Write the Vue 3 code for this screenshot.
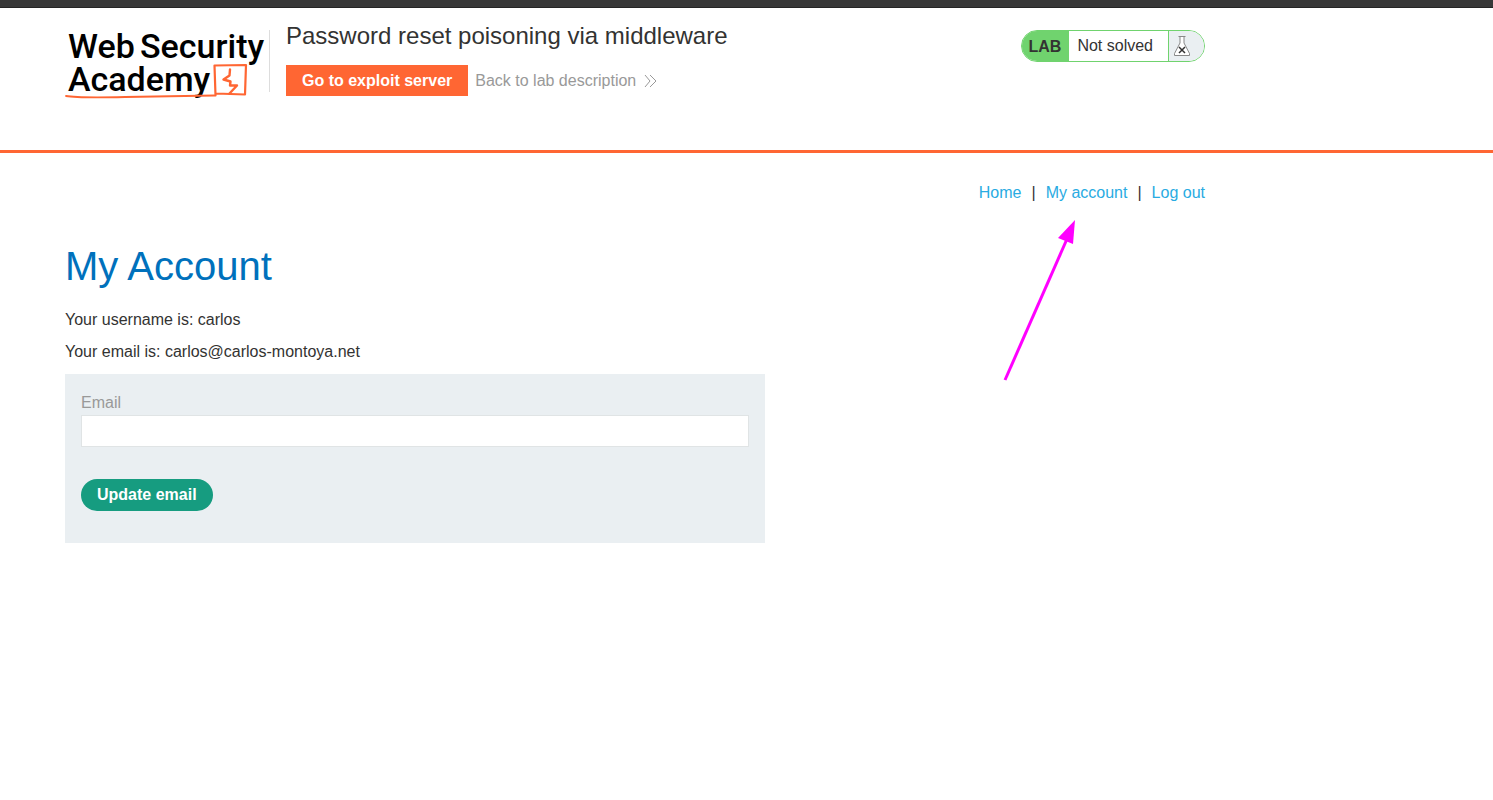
<script setup>
import { ref } from 'vue'

const email = ref('')
const links = ['Home', 'My account', 'Log out']
</script>

<template>
  <div class="page">
    <div class="topbar"></div>
    <header class="banner">
      <div class="container banner-row">
        <a class="logo" href="#" aria-label="Web Security Academy">
          <svg width="200" height="72" viewBox="0 0 200 72">
            <g class="wordmark">
              <text x="3" y="28">Web</text>
              <text x="75" y="28">Security</text>
              <text x="3" y="61">Academy</text>
            </g>
            <g fill="none" stroke="#ff6633" stroke-linejoin="round" stroke-linecap="round">
              <path d="M1 66Q12 68 60 67L149.500 65.500" stroke-width="1.800" />
              <path d="M150.500 65.500L149.500 35.500L181 35L180 64.500L151 63.500" stroke-width="2.200" />
              <path d="M165 39.500L164.500 45.500L158.500 49.500L165.500 51.500L165 55.500L172 55.500L164.500 63.500" stroke-width="2.400" />
            </g>
          </svg>
        </a>
        <div class="title">
          <h2>Password reset poisoning via middleware</h2>
          <div class="actions">
            <a class="exploit" href="#">Go to exploit server</a>
            <a class="back" href="#">
              Back to lab description
              <svg width="14" height="14" viewBox="0 0 14 14" fill="none" stroke="#999" stroke-width="1">
                <path d="M1 1L6 7L1 13M6 1L12 7L6 13" />
              </svg>
            </a>
          </div>
        </div>
        <div class="status">
          <span class="lab">LAB</span>
          <span class="state">Not solved</span>
          <span class="flask">
            <svg width="18" height="22" viewBox="0 0 18 22">
              <path d="M5.500 1.500H12.500M7 1.500V8L1.500 18.500V20.500H16.500V18.500L11 8V1.500" fill="#fff" stroke="#888" />
              <path d="M6 12L12 18M12 12L6 18" fill="none" stroke="#333" stroke-width="1.500" />
            </svg>
          </span>
        </div>
      </div>
    </header>
    <main class="container">
      <nav>
        <template v-for="(link, i) in links" :key="link">
          <span v-if="i" class="sep">|</span>
          <a href="#">{{ link }}</a>
        </template>
        <svg class="arrow" width="76" height="164" viewBox="0 0 76 164">
          <path d="M3 161L65 20" stroke="#ff00ff" stroke-width="3" />
          <path d="M73 1L56 19L71 25Z" fill="#ff00ff" />
        </svg>
      </nav>
      <h1>My Account</h1>
      <p>Your username is: carlos</p>
      <p>Your email is: carlos@carlos-montoya.net</p>
      <form @submit.prevent>
        <label for="email">Email</label>
        <input id="email" v-model="email" type="email">
        <button type="submit">Update email</button>
      </form>
    </main>
  </div>
</template>

<style>
body {
  background: #fff;
}
</style>

<style scoped>
.page {
  font: 16px/20px "Liberation Sans", Arial, sans-serif;
  color: #333332;
}
.page * {
  box-sizing: border-box;
}
a {
  text-decoration: none;
}
.topbar {
  height: 8px;
  background: #383838;
  border-bottom: 1px solid #252525;
}
.container {
  max-width: 1140px;
  margin-left: 65px;
}
.banner {
  min-height: 145px;
  padding-top: 22px;
  border-bottom: 3px solid #ff6633;
}
.banner-row {
  display: flex;
  align-items: flex-start;
}
.logo {
  height: 62px;
  width: 205px;
  border-right: 1px solid #ddd;
}
.logo svg {
  display: block;
  overflow: visible;
}
.wordmark {
  font: 500 34px Roboto, sans-serif;
  fill: #000;
}
.title {
  flex: 1;
  margin-left: 16px;
}
h2 {
  margin: -8px 0 15px;
  font-size: 24px;
  line-height: 28px;
  font-weight: 400;
}
.actions {
  display: flex;
  align-items: center;
  gap: 7px;
}
.exploit {
  padding: 0 16px;
  line-height: 31px;
  background: #ff6633;
  color: #fff;
  font-weight: 700;
}
.back {
  display: flex;
  align-items: center;
  gap: 8px;
  color: #999;
}
.status {
  display: flex;
  height: 32px;
  border: 1px solid #70d36e;
  border-radius: 16px;
  overflow: hidden;
  line-height: 30px;
}
.lab {
  padding: 1px 8px 0 7px;
  background: #70d36e;
  font-weight: 700;
}
.state {
  padding: 0 15px 0 8px;
}
.flask {
  display: flex;
  align-items: center;
  width: 36px;
  padding-left: 4px;
  border-left: 1px solid #70d36e;
  background: #eaeff2;
}
nav {
  position: relative;
  display: flex;
  justify-content: flex-end;
  gap: 10px;
  padding-top: 30px;
}
nav a {
  color: #29abe2;
}
.arrow {
  position: absolute;
  right: 127px;
  top: 66px;
}
h1 {
  margin: 40px 0 20px;
  font-size: 40px;
  line-height: 47px;
  font-weight: 400;
  color: #0071bc;
}
p {
  margin: 0 0 12px;
}
form {
  max-width: 700px;
  padding: 19px 16px 32px;
  background: #eaeff2;
}
label {
  display: block;
  margin-bottom: 2px;
  color: #999;
}
input {
  display: block;
  width: 100%;
  height: 32px;
  padding: 0 8px;
  border: 1px solid #e0e4e5;
  background: #fff;
  font: inherit;
}
button {
  display: block;
  height: 32px;
  margin-top: 32px;
  padding: 0 16px;
  border: 0;
  border-radius: 16px;
  background: #169c80;
  color: #fff;
  font: inherit;
  font-weight: 700;
}
</style>
